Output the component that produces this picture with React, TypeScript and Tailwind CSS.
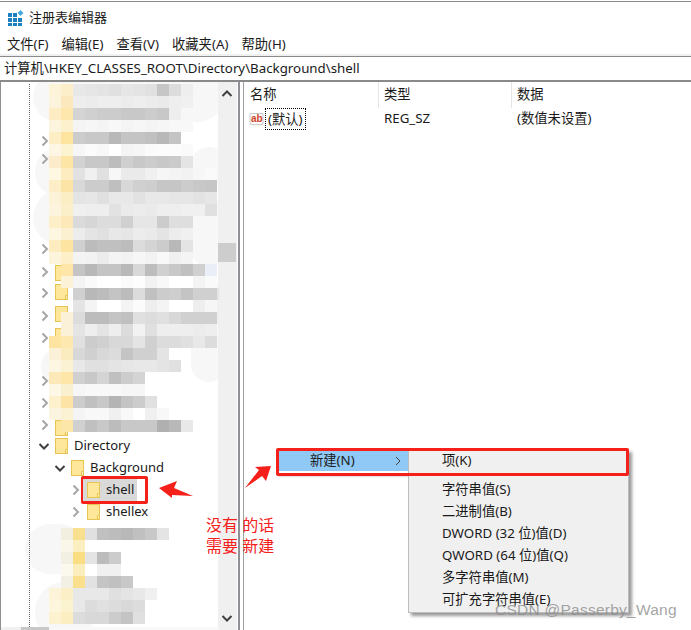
import { ReactNode } from "react"

const FONT = "font-['Noto_Sans','Noto_Sans_CJK_SC',sans-serif]"

type Row = { left?: number; cells: string }

// mosaic rows of the censored tree, 12px cells. yellow cells are 6 digit, grays 2 digit
const topRows: Row[] = [
  { cells: "fdf3d8 fdeeca e8 e6 e4 e0 e6 e4 e0 c6 dc ee" },
  { cells: "fcf3dc fbe9bd ee ec ee ee ec ee ec ea ee f0" },
  { cells: "fdecc4 fde7ad d4 d0 cc cc c8 c8 cc c8 ee" },
  { cells: "fdf4de fdf0cc f4 f6 f4 f8 f4 f6 f4 f6 f8 f8" },
  { cells: "fdeec6 fde49f cc c8 c8 b8 c4 c4 c0 b8 c4" },
  { cells: "fdf6e4 fcf3d0 f6 fb f8 ff f4 f6 fb fc fc fa" },
  { cells: "fceccc fde5a5 d2 c8 c8 bd cf c8 cc c8 cb e4" },
  { cells: "fef7e2 fdecc0 e2 f0 e0 f7 ea ea f0 f6 f4 f2 f7 fa" },
  { cells: "fdeec8 fce4a6 d8 cc cc bf d8 d0 ce c6 c6 cc c8 c6" },
  { cells: "fcf2d8 fbeec4 e4 e6 e0 e8 e8 e2 e8 e8 e6 e6 e2 e6" },
  { cells: "fcf4dc fbefca f0 ee ee e2 ea ec ea ee ee f0 f0 e0" },
  { cells: "fdefc8 fde8ba da d6 dc dc d0 e6 e6 cc de de" },
  { cells: "fdf6e0 fbf0d0 ec e4 e0 e8 e6 ec ea e4 ec f0" },
  { cells: "fdecc0 fde4a0 d0 bc c0 c0 bc dc d4 cc b8 e4" },
  { cells: "fdf4dc fdf0c8 f4 f2 ec f4 f2 f6 f2 f8 f0 f4" },
  { left: 60, cells: "fee6a8 c4 b8 c4 c4 b8 d8 bc d0 c8 c0 d0 eaeef6" },
  { left: 60, cells: "fbf2d8 f4 fa ff ff fa fd f2 f8 ff ff f4 fa" },
  { left: 72, cells: "d0 b8 bc c4 bc dc c0 cc ce c4 d0 d0 e4" },
  { left: 72, cells: "e4 f4 ff ff f4 fb ee f4 ff ff ee f6 f0" },
  { left: 60, cells: "fbf0d8 dc bc bc c4 c0 e0 dc e0 d8 d0 d0 d0 ee" },
  { left: 60, cells: "fbf0d8 e4 ee e4 ee dc f2 e0 ee ee ee ec ee" },
  { cells: "fde4a0 fde8b0 e0 cc d0 d8 d8 e4 d0 dc dc e0 e8 dc" },
  { cells: "fbf0d8 fbecc0 d8 d0 d8 dc c4 d0 d0 e4" },
  { cells: "fdf6e2 fbf2d4 e8 e0 e0 e4 e6 e8 e8 e4 e0" },
  { cells: "fde8ba fde6a8 d0 c8 d4 c0 cc d4" },
  { cells: "fdf7e6 f9f0d0 f6 f8 f8 f8 f6 f6" },
  { cells: "fdf0cc fde4a6 cc c0 c8 b4 c4 cc e0" },
  { cells: "fbf4e0 fbf2d4 f4 f8 f8 f0 f8 ff f0 f8" },
  { left: 60, cells: "fde7a8 d0 c0 c8 bc c8 c8 c8 b0 b8 e8" },
]

const bottomRows: Row[] = [
  { left: 60, cells: "f2eee0 f9e08e e0 c0 bc b8 c0 c8 e4" },
  { left: 60, cells: "faf6ea fbeec0" },
  { left: 60, cells: "f2f0e2 f9de84 e4 bc cc" },
  { left: 60, cells: "fbf8ee fbeebc ff f0 f0" },
  { left: 60, cells: "f2f0e4 fae08c e2 c4 c0 c8" },
  { cells: "fcf3d8 fbefc8 e8 e8 e8 e0 e4 e8 f0" },
  { cells: "fdf6dc fbf2d0 e8 dc e0 dc d8 dc" },
  { cells: "fdf2d0 fbeec0 dc d8 d8 cc c4 e0" },
]

function Mosaic({ rows }: { rows: Row[] }) {
  return (
    <div className="relative z-10 flex flex-col">
      {rows.map((row, i) => (
        <div key={i} className="flex h-3" style={{ paddingLeft: row.left ?? 48 }}>
          {row.cells.split(" ").map((c, j) => (
            <div key={j} className="h-3 w-3 shrink-0" style={{ background: c.length === 2 ? `#${c}${c}${c}` : `#${c}` }} />
          ))}
        </div>
      ))}
    </div>
  )
}

function Folder({ className = "" }: { className?: string }) {
  return (
    <svg width="13" height="16" viewBox="0 0 13 16" className={className}>
      <rect x="0.5" y="0.5" width="12" height="15" fill="#fee69a" stroke="#e8c552" />
      <path d="M10.5 15.5v-4h2" fill="#fff4c8" stroke="#e8c552" />
    </svg>
  )
}

function Chevron({ down, dark, className = "" }: { down?: boolean; dark?: boolean; className?: string }) {
  return (
    <svg width="12" height="12" viewBox="0 0 12 12" className={className}>
      <path
        d={down ? "M1.5 4l4.5 4.5L10.5 4" : "M3.5 1.5L8 6l-4.5 4.5"}
        fill="none"
        stroke={dark ? "#404040" : "#a6a6a6"}
        strokeWidth="2"
      />
    </svg>
  )
}

function TreeRow({ indent, open, label, selected }: { indent: number; open?: boolean; label: string; selected?: boolean }) {
  return (
    <div className="flex h-[22px] items-center" style={{ paddingLeft: indent }}>
      <Chevron down={open} dark={open} className="mr-[5px]" />
      <div className={`flex h-[22px] items-center ${selected ? "-ml-[4px] w-[54px] bg-[#d9d9d9] pl-[4px]" : ""}`}>
        <Folder />
        <span className="-mt-px ml-[6px] text-[13px] leading-none text-[#1a1a1a]">{label}</span>
      </div>
    </div>
  )
}

function Blob({ className }: { className: string }) {
  return <div className={`absolute rounded-full bg-[#f7f7f7] ${className}`} />
}

function MenuItem({ children }: { children: ReactNode }) {
  return <div className="flex h-[22px] items-center pl-[33px] text-[13.3px] text-[#1a1a1a]">{children}</div>
}

const chevronTops = [141, 159, 249, 272, 293, 316, 338, 381, 403, 425]
const folderTops = [265, 284, 306, 328, 420]

export default function App() {
  return (
    <div className={`relative h-[630px] w-[691px] overflow-hidden bg-white ${FONT}`}>
      <div className="h-[2px] border-b border-[#8a8a8a]" />

      {/* title bar */}
      <div className="flex h-[30px] items-center gap-[5px] pl-[8px] pt-[2px]">
        <svg width="16" height="16" viewBox="0 0 16 16">
          <path d="M0 3h4v4H0zM5 3h4v4H5zM0 8h4v4H0zM5 8h4v4H5zM10 8h4v4h-4zM0 13h4v3H0zM5 13h4v3H5zM10 13h4v3h-4z" fill="#1c7fbf" />
          <path d="M12.5 0l3 3-3 3-3-3z" fill="#45a9dc" />
        </svg>
        <span className="text-[13px] text-[#1a1a1a]">注册表编辑器</span>
      </div>

      {/* menu bar */}
      <div className="flex h-[22px] items-center gap-[13px] pl-[7px] pt-[3px] text-[13.3px] text-[#1a1a1a]">
        <span>文件(F)</span>
        <span>编辑(E)</span>
        <span>查看(V)</span>
        <span>收藏夹(A)</span>
        <span>帮助(H)</span>
      </div>

      {/* address bar */}
      <div className="h-[2px] bg-[#f0f0f0]" />
      <div className="flex h-[25px] items-center border-y border-t-[#8a8a8a] border-b-[#8a8a8a] pl-[4px] text-[13.3px] text-[#1a1a1a]">
        计算机\HKEY_CLASSES_ROOT\Directory\Background\shell
      </div>
      <div className="h-px bg-[#8a8a8a]" />

      <div className="flex h-[549px]">
        {/* tree pane */}
        <div className="relative w-[240px] shrink-0 border-r-2 border-l border-[#8f8f96]">
          <div className="relative h-full w-[218px] overflow-hidden">
            <Blob className="left-[32px] top-[-10px] h-[50px] w-[190px]" />
            <Blob className="left-[34px] top-[65px] h-[50px] w-[50px]" />
            <Blob className="left-[32px] top-[108px] h-[55px] w-[60px]" />
            <Blob className="left-[190px] top-[65px] h-[40px] w-[36px]" />
            <Blob className="left-[190px] top-[115px] h-[70px] w-[36px]" />
            <Blob className="left-[190px] top-[200px] h-[100px] w-[36px]" />
            <Blob className="left-[40px] top-[265px] h-[40px] w-[40px]" />
            <Blob className="left-[24px] top-[442px] h-[50px] w-[60px]" />
            <Blob className="left-[34px] top-[500px] h-[60px] w-[60px]" />

            <div className="absolute bottom-[4px] left-[28px] top-[2px] border-l border-dotted border-[#666666]" />
            <div className="flex flex-col pt-[2px]">
              <Mosaic rows={topRows} />
              <div className="relative z-10 pt-[3px]">
                <TreeRow indent={37} open label="Directory" />
                <TreeRow indent={53} open label="Background" />
                <TreeRow indent={69} label="shell" selected />
                <TreeRow indent={69} label="shellex" />
              </div>
              <div className="h-[5px]" />
              <Mosaic rows={bottomRows} />
            </div>

            {chevronTops.map((y) => (
              <div key={y} className="absolute left-[38px] z-20" style={{ top: y - 88 }}>
                <Chevron />
              </div>
            ))}
            {folderTops.map((y) => (
              <div key={y} className="absolute left-[54px] z-[5]" style={{ top: y - 82 }}>
                <Folder />
              </div>
            ))}
          </div>

          {/* horizontal scrollbar */}
          <div className="absolute bottom-0 left-0 z-20 flex h-[4px] w-[218px] bg-[#f8f8f8]">
            <div className="h-full w-[20px] bg-[#f0f0f0]" />
            <div className="h-full w-[28px] bg-[#c8c8c8]" />
          </div>

          {/* vertical scrollbar */}
          <div className="absolute bottom-0 right-[1px] top-0 flex w-[19px] flex-col items-center bg-[#f0f0f0] pr-px">
            <Chevron down dark className="mt-[6px] rotate-180" />
            <div className="mt-[143px] h-[19px] w-[18px] bg-[#cdcdcd]" />
            <div className="flex-1" />
            <Chevron down dark className="mb-[7px]" />
          </div>
        </div>

        {/* value list */}
        <div className="ml-[3px] flex-1 border-l border-[#a0a0a0] text-[13.3px] text-[#1a1a1a]">
          <div className="flex h-[26px] items-center">
            <div className="h-full w-[134px] pl-[6px] leading-[24px]">名称</div>
            <div className="h-full w-[133px] border-l border-[#e5e5e5] pl-[5px] leading-[24px]">类型</div>
            <div className="h-full flex-1 border-l border-[#e5e5e5] pl-[5px] leading-[24px]">数据</div>
          </div>
          <div className="flex h-[22px] items-center">
            <div className="flex w-[134px] items-center pl-[5px]">
              <svg width="15" height="15" viewBox="0 0 15 15">
                <path d="M1 1.5h13v10.5l-3 1-3-1-3 1-4-1z" fill="#fbfbfb" stroke="#c8c8c8" />
                <text x="2" y="10" fontSize="10" fontWeight="700" fill="#d0452a" fontFamily="'Liberation Sans', sans-serif">ab</text>
              </svg>
              <span className="ml-[1px] border border-dotted border-black px-[2px] leading-[20px]">(默认)</span>
            </div>
            <div className="w-[133px] pl-[6px]">REG_SZ</div>
            <div className="flex-1 pl-[6px]">(数值未设置)</div>
          </div>
        </div>
      </div>

      {/* context menus */}
      <div className="absolute left-[277px] top-[449px] h-[26px] w-[131px] bg-white shadow-[1px_1px_2px_rgba(0,0,0,0.35)]">
        <div className="ml-px mt-px flex h-[21px] items-center justify-between bg-[#90c8f6] pl-[32px] pr-[6px] text-[13.3px] text-[#1a1a1a]">
          <span>新建(N)</span>
          <svg width="8" height="10" viewBox="0 0 8 10"><path d="M2 1l4 4-4 4" fill="none" stroke="#404040" /></svg>
        </div>
      </div>
      <div className="absolute left-[408px] top-[449px] h-[164px] w-[221px] border border-[#bdbdbd] bg-[#f0f0f0] shadow-[3px_3px_3px_rgba(0,0,0,0.4)]">
        <MenuItem>项(K)</MenuItem>
        <div className="h-[7px]" />
        <MenuItem>字符串值(S)</MenuItem>
        <MenuItem>二进制值(B)</MenuItem>
        <MenuItem>DWORD (32 位)值(D)</MenuItem>
        <MenuItem>QWORD (64 位)值(Q)</MenuItem>
        <MenuItem>多字符串值(M)</MenuItem>
        <MenuItem>可扩充字符串值(E)</MenuItem>
      </div>

      {/* red annotations */}
      <div className="absolute left-[81px] top-[476px] h-[28px] w-[67px] rounded-[2px] border-[3px] border-[#f5201a]" />
      <div className="absolute left-[276px] top-[448px] h-[28px] w-[353px] rounded-[2px] border-[3px] border-[#f5201a]" />
      <svg width="691" height="630" className="absolute left-0 top-0">
        <polygon points="159,488 177,481 174,488 193,496 172,495 172,498" fill="#f5201a" />
        <polygon points="245,488 259,470 255,467 271,466 266,481 262,476" fill="#f5201a" />
      </svg>
      <div className="absolute left-[206px] top-[515px] whitespace-pre text-[16px] leading-[21px] text-[#f5201a]">
        {"没有 的话\n需要 新建"}
      </div>

      <div className="absolute left-[495px] top-[599px] font-['Liberation_Sans',sans-serif] text-[15.5px] leading-[22px] tracking-[0.25px] text-[#8c8c8c]/80">
        CSDN @Passerby_Wang
      </div>
    </div>
  )
}
